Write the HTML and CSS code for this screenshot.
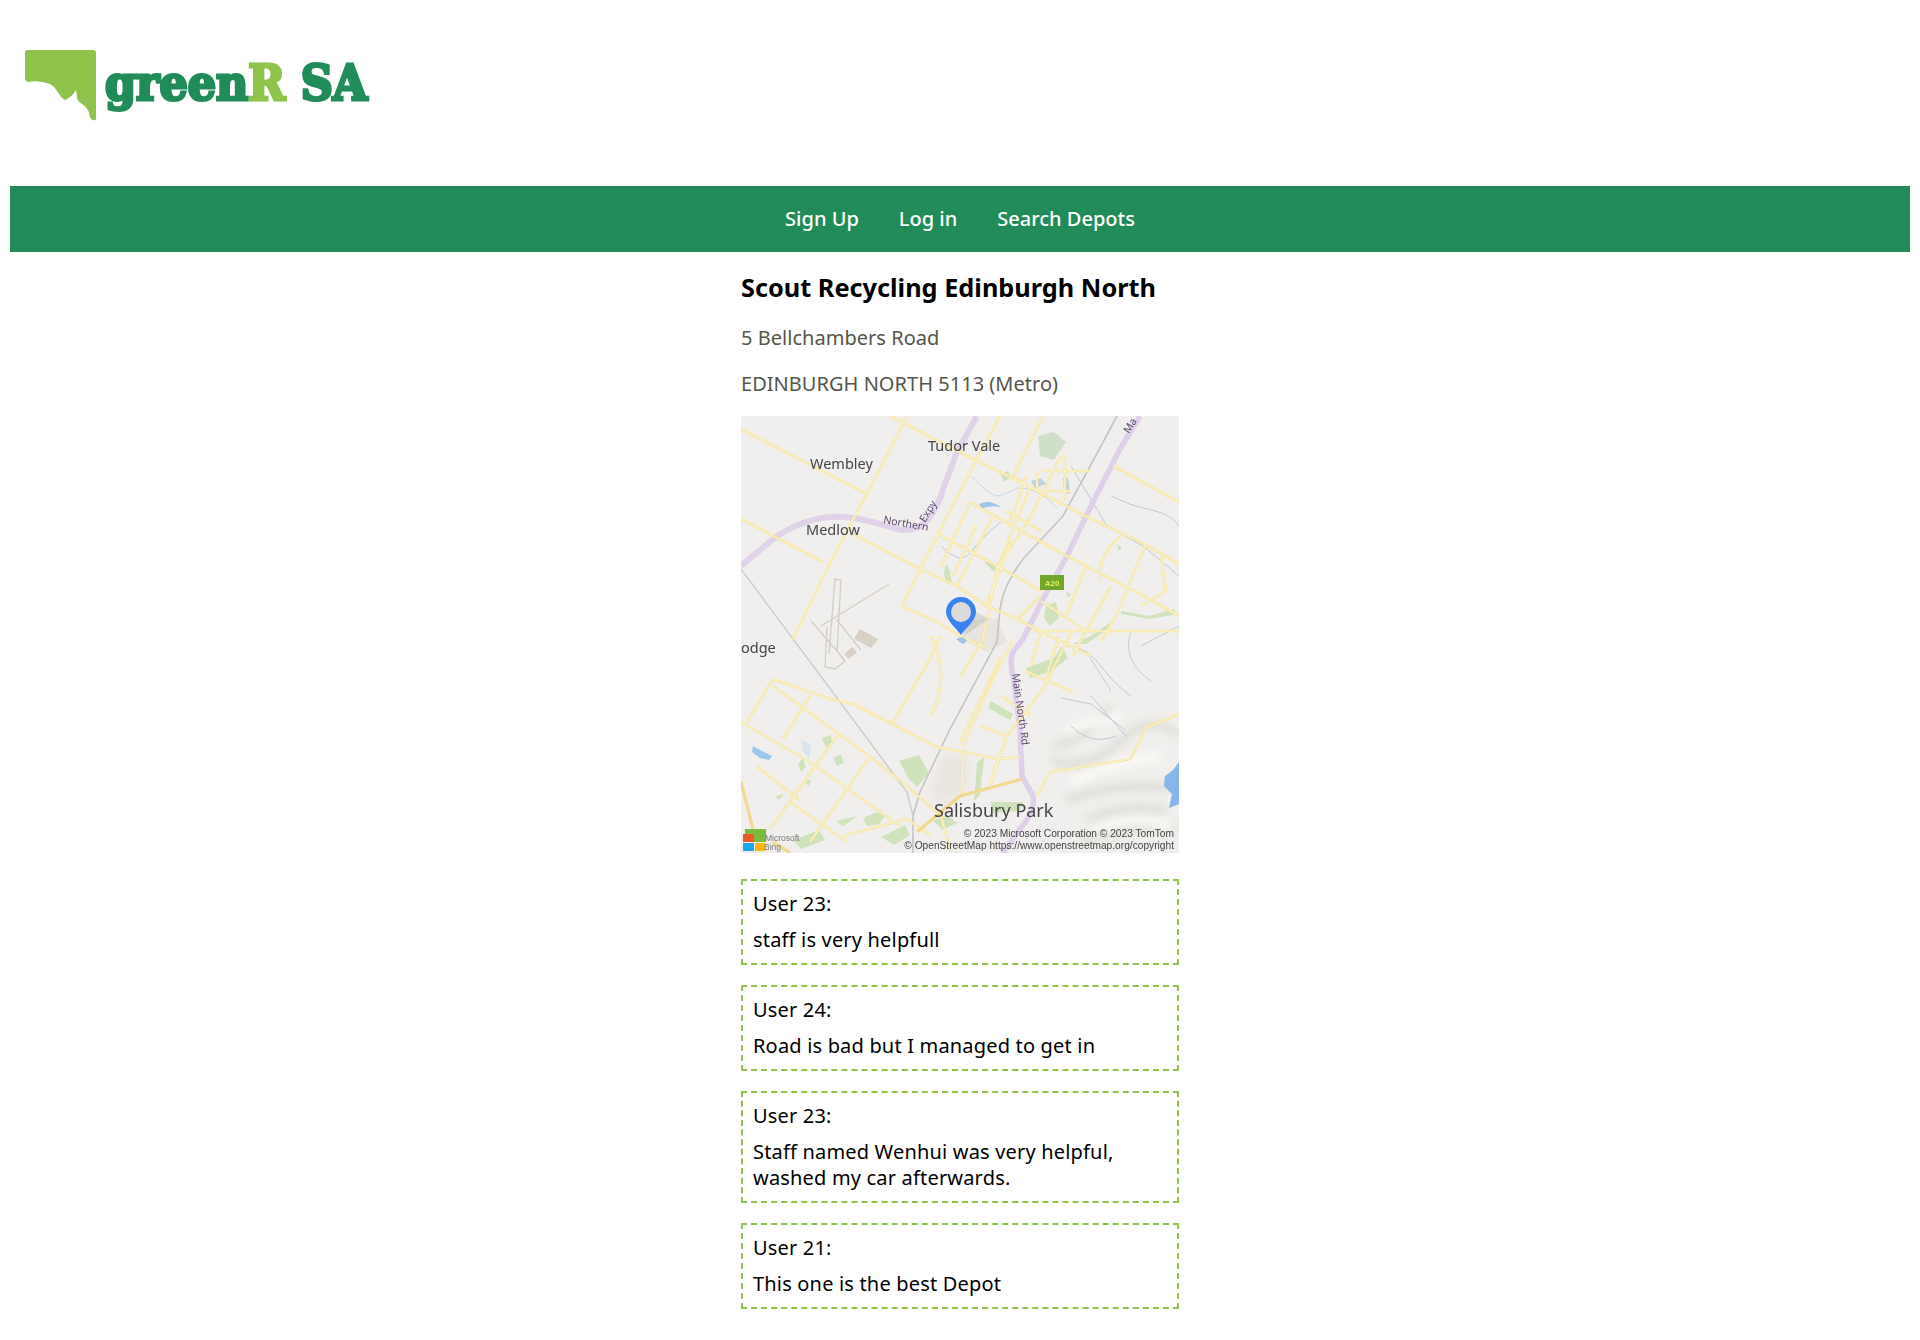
FILE: index.html
```html
<!DOCTYPE html>
<html lang="en">
<head>
<meta charset="utf-8">
<title>greenR SA</title>
<link rel="stylesheet" href="styles.css">
</head>
<body>
<header class="site-header">
  <div class="logo">
    <svg class="logo-mark" viewBox="0 0 72 72" width="72" height="72" aria-hidden="true">
      <path fill="#8fc34c" d="M3 0H68Q71 0 71 3V69Q71 71 68 70Q65 70 64 63Q63 58 57 54Q51 50 52 46L51 40Q47 47 40 50Q37 49 32 41Q29 36 25 34Q14 30 3 32Q0 31 0 28V3Q0 0 3 0Z"/>
    </svg>
    <span class="logo-text">green<span class="logo-r">R</span> SA</span>
  </div>
</header>
<nav class="navbar">
  <a href="#">Sign Up</a>
  <a href="#">Log in</a>
  <a href="#">Search Depots</a>
</nav>
<main class="content">
  <h2 class="title">Scout Recycling Edinburgh North</h2>
  <p class="address">5 Bellchambers Road</p>
  <p class="address">EDINBURGH NORTH 5113 (Metro)</p>
  <svg class="map" viewBox="0 0 438 437" width="438" height="437" role="img" aria-label="Map">
    <defs>
      <filter id="soft"><feGaussianBlur stdDeviation="0.4"/></filter>
      <filter id="softer"><feGaussianBlur stdDeviation="4"/></filter>
      <clipPath id="mapclip"><rect width="438" height="437"/></clipPath>
      <g id="roads">
        <path d="M0 13L126 78L166 0M126 78L116 96L86 153L52 223"/>
        <path d="M149 0L232 43L289 71L336 96L399 126L438 148"/>
        <path d="M0 103L32 120L82 146"/>
        <path d="M112 118L179 153L216 170L246 190L276 203L309 220L350 240"/>
        <path d="M161 190L197 118L256 150L300 175M161 190L196 206L219 220L245 232"/>
        <path d="M259 0L229 56L179 153M302 0L272 60L289 71L256 153L242 223L220 260"/>
        <path d="M372 50L438 86M229 86L289 120L326 140L399 178L438 200"/>
        <path d="M229 86L200 150M252 100L216 170M320 40L290 100L256 153M324 38V85M300 55H350M296 55V75H330"/>
        <path d="M380 120Q355 140 360 165M404 130L375 200L360 225M420 140L425 175L400 190"/>
        <path d="M276 203L300 180M290 215H438M300 185L345 215L332 240M345 150L325 200M370 170L345 215M300 215L290 250M318 220L305 262"/>
        <path d="M270 125L245 190M235 110L212 160M285 60L268 110M265 95L300 115"/>
        <path d="M32 263L89 283L112 288L196 331L256 343L279 341M32 263L6 306M0 306L69 346L159 410"/>
        <path d="M32 270L132 343L166 370M69 280L42 323M96 320L29 413M127 343L69 426M49 386L106 426M15 350L60 385"/>
        <path d="M152 306L189 243L199 220M222 330L252 263L272 225M219 326L260 240M222 333L221 380M256 345L249 370M302 273L266 320L249 370M332 213L302 273M284 255L332 276M240 310L266 320M260 280L290 300"/>
        <path d="M296 380L309 356L389 343L406 311L438 298M102 420L166 403L190 420M166 370L200 400L210 436"/>
        <path d="M190 220Q210 260 190 300"/>
      </g>
    </defs>
    <g clip-path="url(#mapclip)">
    <rect width="438" height="437" fill="#f0efed"/>
    <g filter="url(#softer)">
      <path fill="none" stroke="#dcdcd4" stroke-width="7" d="M310 345Q350 355 380 325T438 320M325 385Q370 365 438 372M345 405Q385 385 425 395M340 425Q380 412 438 410M312 330Q345 325 370 290"/>
      <path fill="none" stroke="#fdfdfa" stroke-width="7" d="M330 365Q375 345 420 340M350 415Q390 400 430 410M325 315Q355 305 380 300"/>
      <path fill="#eae5df" d="M200 340H228V370L205 390L190 380Z"/>
    </g>
    <g filter="url(#soft)">
      <g fill="#cfe2bc">
        <path d="M297 20l16-4 12 10-12 18-14-4z" fill="#cfdfca"/>
        <path d="M260 58l7-3 3 6-7 5z"/>
        <path d="M246 142l10 10-3 4-9-9z"/>
        <path d="M305 190l10-4 3 16-9 8-6-8z"/>
        <path d="M205 147l4 8 2 14-6-2-2-10z"/>
        <path d="M250 285l22 13-3 6-22-12z"/>
        <path d="M285 252l28-10 8-12 6 12-16 13-22 7z"/>
        <path d="M332 228l18-8 20-14-3 7-22 15z"/>
        <path d="M158 345l20-6 10 18-12 14-8-8z"/>
        <path d="M233 385l3-38 7-6-4 38z"/>
        <path d="M250 386h32l-3 9-27 2z"/>
        <path d="M81 322l9-3 1 10-6 2zM57 348l5-6 3 9-5 5zM92 342l8-4 3 9-7 3z"/>
        <path d="M122 402l14-6 8 4-6 8-12 2zM95 405l22-5-15 10z"/>
        <path d="M140 421l24-12 5 10-16 10z"/>
        <path d="M52 424l26-10 6 10-24 9z"/>
        <path d="M34 380l9-2-5 6zM64 365l6-2-2 8z"/>
        <path d="M192 405l14-6 10 8-14 7zM380 195l28 5 26-7-2 6-24 4-28-5z"/>
        <path d="M376 128l5 3-3 4zM340 100l4 2-2 4zM325 176l5 2-3 4z"/>
      </g>
      <g fill="none" stroke="#b4c6d2" stroke-width=".9">
        <path d="M230 60q20 20 26 20t20-8q20-2 40 20" stroke="#bfd3e2"/>
        <path d="M200 130q20 20 30 6t30-30"/>
        <path d="M330 50l36 60 36 20 36 30"/>
        <path d="M370 80q20 10 40 14t28 16"/>
        <path d="M325 230q20 0 35 20t30 30M345 235l25 40M350 280l35 40M390 215q-10 30 20 50M400 230l38-20M320 282l30 6 34 26M330 310q20 20 45 10"/>
      </g>
      <g fill="#9cc6ec">
        <path d="M12 330l9 5 10 5-3 4-9-2-8-6z"/>
        <path d="M60 323l10 6-2 14-6-8z" fill="#d8e4ee"/>
        <path d="M424 360l8-6 6-8v42l-10 4 3-14-8-8z" fill="#86b6ea"/>
        <path d="M290 65l10-3 5 6-11 4zM322 62l5 0 2 16-6-2z" fill="#bcd2e2"/>
        <path d="M238 88q10-5 22 3-12-2-19 2z"/>
      </g>
      <g fill="#d9d0c8">
        <path d="M119 213l18 10-7 9-17-9z"/>
        <path d="M103 238l8-7 5 5-8 7z"/>
        <path d="M228 204l28-2 10 24-20 10-22-12z" fill="#e8e4de"/>
      </g>
      <g fill="none" stroke="#d2cfca" stroke-width="1.4">
        <path d="M88 238l6-75 6 1-4 72M80 210l68-42M96 204l24 30M70 205l26 30 8 10-10 8-10-2 2-40"/>
      </g>
      <path d="M0 150L32 123Q60 103 90 101Q110 99 146 110Q170 120 186 105Q198 90 202 73L216 36L236 0" fill="none" stroke="#e0d2e8" stroke-width="6"/>
      <path d="M399 0L379 33L352 86L326 140L302 183L282 223L272 236Q268 245 272 260L279 313L281 360L292 380Q295 395 279 413L262 437" fill="none" stroke="#ddd0e8" stroke-width="5.5"/>
      <g fill="none" stroke="#c4c4c4" stroke-width="1.6">
        <path d="M376 0L346 56L322 100L282 143Q262 170 259 193L256 226L209 313L179 376L172 400V437"/>
        <path d="M0 153L52 223L99 286L166 376L172 400" stroke="#cfcfcf"/>
      </g>
      <use href="#roads" fill="none" stroke="#f4e39c" stroke-width="2.6" stroke-linejoin="round"/>
      <use href="#roads" fill="none" stroke="#fdf8dc" stroke-width=".9" stroke-linejoin="round"/>
      <g fill="none" stroke="#f2d88c" stroke-width="3.2">
        <path d="M176 416L219 380L281 363M0 366L12 413M32 426L49 437"/>
      </g>
      <path d="M220 227l-5-4 6-2 5 3-3 4z" fill="#9ec4ec"/>
      <path d="M226 191l22 12-26 18z" fill="#bdbab5" opacity=".45"/>
      <g class="map-label">
        <text x="187" y="35" font-size="14.5">Tudor Vale</text>
        <text x="69" y="53" font-size="14.5">Wembley</text>
        <text x="65" y="119" font-size="14.5">Medlow</text>
        <text x="0" y="237" font-size="14.5">odge</text>
        <text x="193" y="401" font-size="18">Salisbury Park</text>
      </g>
      <g class="road-label">
        <text font-size="10.5" transform="translate(142 107) rotate(10)">Northern</text>
        <text font-size="10.5" transform="translate(184 107) rotate(-58)">Expy</text>
        <text font-size="10.5" transform="translate(271 258) rotate(82)">Main North Rd</text>
        <text font-size="10.5" transform="translate(388 18) rotate(-58)">Ma</text>
      </g>
      <rect x="299" y="159" width="24" height="15" fill="#6fa62a"/>
      <text class="shield" x="311" y="170" text-anchor="middle">A20</text>
      <text class="attrib" x="433" y="421" text-anchor="end">© 2023 Microsoft Corporation © 2023 TomTom</text>
      <text class="attrib" x="433" y="433" text-anchor="end">© OpenStreetMap https://www.openstreetmap.org/copyright</text>
      <rect x="4" y="413" width="21" height="13" fill="#7dba3c"/>
      <rect x="2" y="418" width="11" height="8" fill="#ea5a28"/>
      <rect x="2" y="427" width="11" height="8" fill="#1fa5e8"/>
      <rect x="14" y="427" width="10" height="8" fill="#fbb90e"/>
      <text class="ms" x="24" y="425">Microsoft</text>
      <text class="ms" x="23" y="434">Bing</text>
    </g>
    <path d="M220 219C215 212 205 204 205 196A15 15 0 0 1 235 196C235 204 225 212 220 219Z" fill="#3a82ee"/>
    <circle cx="220" cy="196" r="10" fill="#dddbd9"/>
    </g>
  </svg>
  <section class="reviews">
    <article class="review"><p>User 23:</p><p>staff is very helpfull</p></article>
    <article class="review"><p>User 24:</p><p>Road is bad but I managed to get in</p></article>
    <article class="review"><p>User 23:</p><p>Staff named Wenhui was very helpful, washed my car afterwards.</p></article>
    <article class="review"><p>User 21:</p><p>This one is the best Depot</p></article>
  </section>
</main>
</body>
</html>
```
FILE: styles.css
```css
* { box-sizing: border-box; }
html, body { margin: 0; background: #fff; }
body {
  padding: 0 10px;
  font-family: "Noto Sans", "Open Sans", sans-serif;
  font-size: 20px;
  line-height: 26px;
  color: #000;
}
.site-header { height: 186px; padding: 50px 15px 0; }
.logo { display: flex; align-items: flex-start; }
.logo-mark { flex: none; }
.logo-text {
  margin: 8px 0 0 8px;
  font-family: "DejaVu Serif Condensed", "DejaVu Serif", serif;
  font-weight: 700;
  font-size: 49.4px;
  line-height: 50px;
  letter-spacing: 0;
  color: #218c5a;
  -webkit-text-stroke: 3px currentColor;
  white-space: nowrap;
}
.logo-r { color: #8fc34c; }
.navbar {
  display: flex;
  justify-content: center;
  gap: 40px;
  height: 66px;
  align-items: center;
  background: #218c5a;
}
.navbar a { color: #fff; text-decoration: none; font-weight: 500; }
.content { width: 438px; margin: 0 auto; }
.title { margin: 19px 0 0; font-size: 25.3px; line-height: 32px; font-weight: 700; }
.address { margin: 22px 0 0; color: #55554b; letter-spacing: .03px; }
.address + .address { margin-top: 20px; }
.map { display: block; margin-top: 19px; }
.map-label text { fill: #444; font-family: "Noto Sans", sans-serif; }
.road-label text { fill: #5c4a70; font-family: "Noto Sans", sans-serif; }
.shield { font: 700 8px "Liberation Sans", sans-serif; fill: #e8ef60; }
.attrib { font: 10.2px "Liberation Sans", sans-serif; fill: #444; }
.ms { font: 8.5px "Liberation Sans", sans-serif; fill: #777; }
.reviews { display: flex; flex-direction: column; gap: 20px; margin-top: 26px; padding-bottom: 30px; }
.review { border: 2px dashed #8fc34c; padding: 10px 10px 10px; letter-spacing: .18px; }
.review p { margin: 0; }
.review p + p { margin-top: 10px; }
```
